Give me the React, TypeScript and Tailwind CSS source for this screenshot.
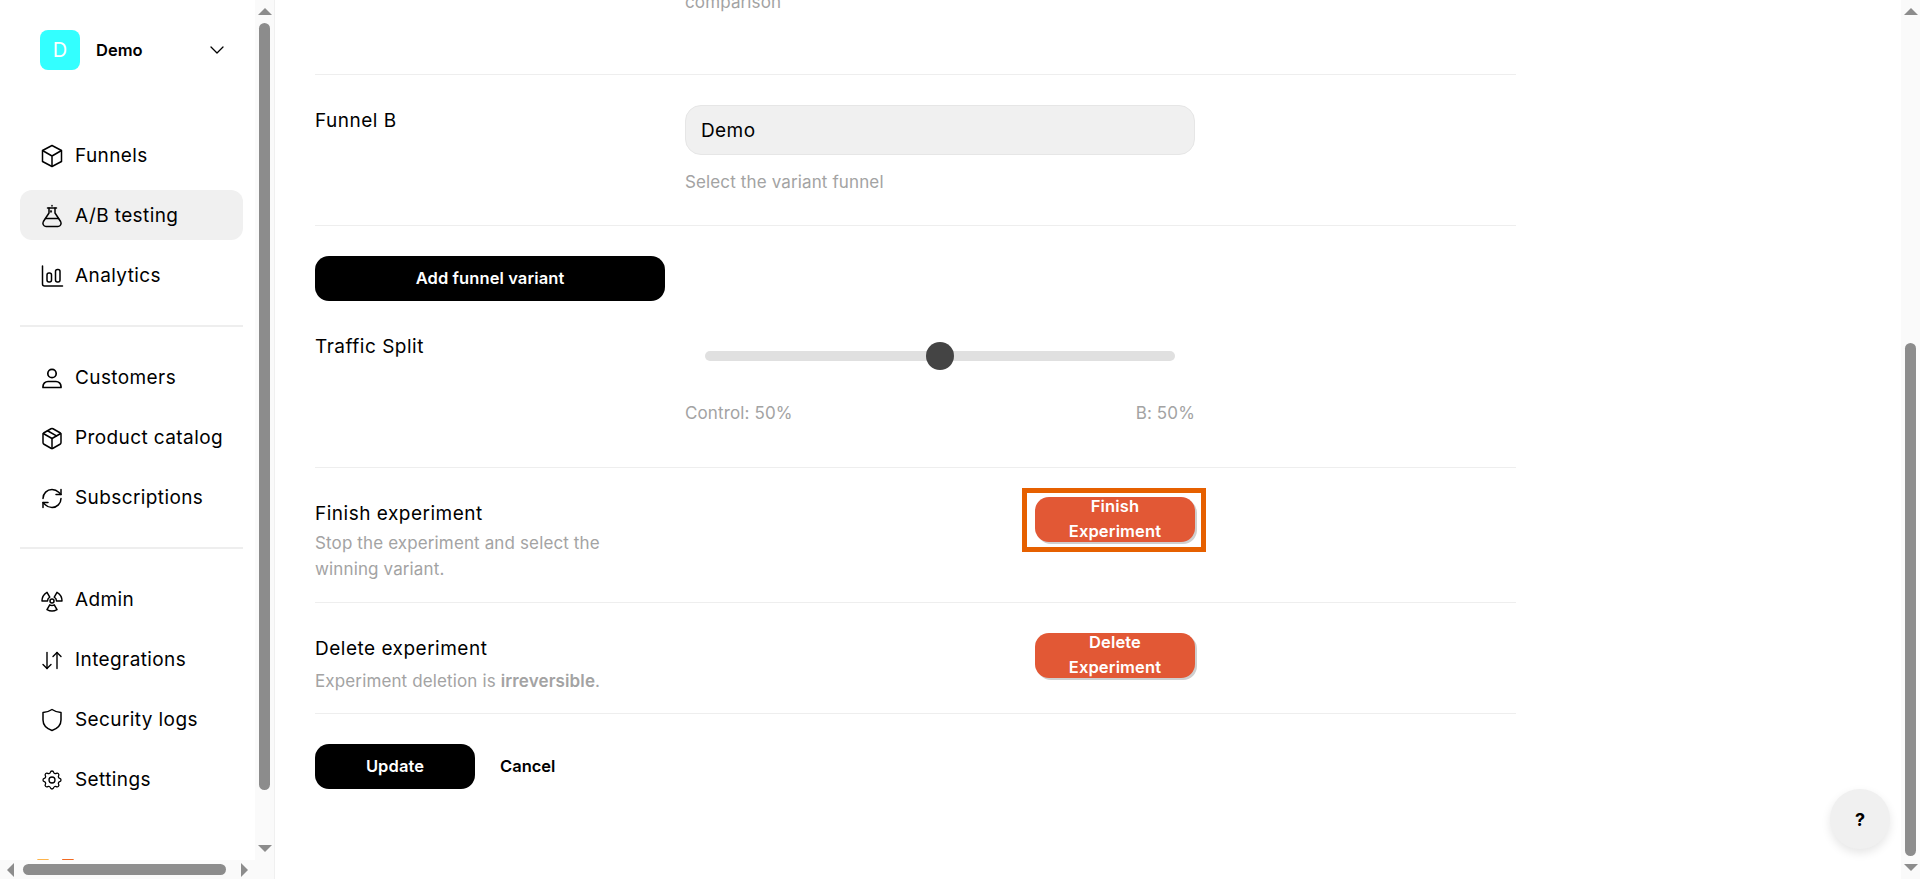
import { Fragment } from "react";
import { ChevronDown, ArrowDownUp, Package, RefreshCw } from "lucide-react";
import { TbSettings } from "react-icons/tb";

function BoxIcon() {
	return (
		<svg viewBox="0 0 24 24" className="w-[24px] h-[24px]" fill="none" stroke="currentColor" strokeWidth="1.5" strokeLinejoin="round">
			<path d="M12 1.5 21.5 6.5V17.5L12 22.5 2.5 17.5V6.5Z" />
			<path d="M2.5 6.5 12 12 21.5 6.5M12 12V22.5" />
		</svg>
	);
}

function FlaskIcon() {
	return (
		<svg viewBox="0 0 24 24" className="w-[24px] h-[24px]" fill="none" stroke="currentColor" strokeWidth="1.5" strokeLinecap="round" strokeLinejoin="round">
			<path d="M7.5 4h9M12 1.5v.5" />
			<path d="M9 4v5L3.4 17.5C2.2 19.6 3.4 22.5 6 22.5h12c2.6 0 3.8-2.9 2.6-5L15 9V4" />
			<path d="M5.5 14.5h13" />
			<circle cx="11" cy="7.5" r="0.4" />
		</svg>
	);
}

function ChartIcon() {
	return (
		<svg viewBox="0 0 24 24" className="w-[24px] h-[24px]" fill="none" stroke="currentColor" strokeWidth="1.5" strokeLinecap="round">
			<path d="M2.5 2V20a2 2 0 0 0 2 2h18" />
			<rect x="7" y="9" width="4.5" height="9" rx="2" />
			<rect x="15.5" y="5.5" width="4.5" height="12.5" rx="2" />
		</svg>
	);
}

function UserIcon() {
	return (
		<svg viewBox="0 0 24 24" className="w-[24px] h-[24px]" fill="none" stroke="currentColor" strokeWidth="1.7">
			<circle cx="12" cy="7.5" r="4.2" />
			<path d="M3 21.5v-1a5 5 0 0 1 5-5h8a5 5 0 0 1 5 5v1z" strokeLinejoin="round" />
		</svg>
	);
}

function RadiationIcon() {
	const lobe = "M9.75 16.9 7 21.66A10 10 0 0 0 17 21.66L14.25 16.9A4.5 4.5 0 0 1 9.75 16.9Z";
	return (
		<svg viewBox="0 0 24 24" className="w-[24px] h-[24px]" fill="none" stroke="currentColor" strokeWidth="1.5" strokeLinejoin="round">
			<circle cx="12" cy="13" r="2" />
			<path d={lobe} />
			<path d={lobe} transform="rotate(120 12 13)" />
			<path d={lobe} transform="rotate(240 12 13)" />
		</svg>
	);
}

function ShieldIcon() {
	return (
		<svg viewBox="0 0 24 24" className="w-[24px] h-[24px]" fill="none" stroke="currentColor" strokeWidth="1.5" strokeLinejoin="round">
			<path d="M12 1.5C14.8 3.4 17.8 4.4 21 4.6V12c0 5.2-3.6 8.6-9 10.5C6.6 20.6 3 17.2 3 12V4.6C6.2 4.4 9.2 3.4 12 1.5Z" />
		</svg>
	);
}

const navGroups = [
	[
		{ label: "Funnels", icon: <BoxIcon /> },
		{ label: "A/B testing", icon: <FlaskIcon />, active: true },
		{ label: "Analytics", icon: <ChartIcon /> },
	],
	[
		{ label: "Customers", icon: <UserIcon /> },
		{ label: "Product catalog", icon: <Package size={25} strokeWidth={1.5} /> },
		{ label: "Subscriptions", icon: <RefreshCw size={25} strokeWidth={1.5} /> },
	],
	[
		{ label: "Admin", icon: <RadiationIcon /> },
		{ label: "Integrations", icon: <ArrowDownUp size={25} strokeWidth={1.4} /> },
		{ label: "Security logs", icon: <ShieldIcon /> },
		{ label: "Settings", icon: <TbSettings size={30} strokeWidth={1.3} /> },
	],
];

function NavItem({ label, icon, active }: { label: string; icon: React.ReactNode; active?: boolean }) {
	return (
		<div className={`flex items-center h-[50px] pt-[2px] px-[20px] gap-[11px] rounded-[12px] text-[19px] tracking-[0.4px] ${active ? "bg-[#f0f0f0]" : ""}`}>
			<span className="w-[24px] h-[24px] flex items-center justify-center shrink-0">{icon}</span>
			<span className="pt-[1px]">{label}</span>
		</div>
	);
}

function Sidebar() {
	return (
		<div className="relative w-[275px] h-full shrink-0 border-r border-[#f0f0f0] flex flex-col overflow-hidden">
			<div className="flex flex-1 min-h-0">
				<div className="w-[255px] shrink-0 flex flex-col pl-[20px] pr-[12px] overflow-hidden">
					<div className="flex items-center mt-[30px] pl-[20px] pr-[14px]">
						<div className="w-[40px] h-[40px] rounded-[8px] bg-[#33ffff] text-white text-[20px] flex items-center justify-center">D</div>
						<div className="ml-[16px] font-semibold text-[16.5px] flex-1">Demo</div>
						<ChevronDown size={24} strokeWidth={1.3} />
					</div>
					<div className="mt-[60px] flex flex-col">
						{navGroups.map((group, i) => (
							<Fragment key={i}>
								{i > 0 && <div className="h-[2px] bg-[#eeeeee] mt-[25px] mb-[25px]" />}
								<div className="flex flex-col gap-[10px]">
									{group.map((item) => (
										<NavItem key={item.label} label={item.label} icon={item.icon} active={item.active} />
									))}
								</div>
							</Fragment>
						))}
					</div>
					{/* bottom of the logo, cut off by the scroll area */}
					<svg viewBox="0 0 37 3" className="mt-[55px] ml-[17px] w-[37px] h-[3px] shrink-0">
						<polygon points="0,0 12,0 10,3 2,3" fill="#fdb44b" />
						<polygon points="25,0 37,0 35,3 26,3" fill="#f26a21" />
					</svg>
				</div>
				<div className="w-[19px] shrink-0 bg-[#fafafa] flex flex-col items-center">
					<div className="mt-[8px] w-0 h-0 border-x-[7px] border-x-transparent border-b-[7px] border-b-[#8c8c8c]" />
					<div className="mt-[8px] w-[11px] h-[767px] rounded-full bg-[#8c8c8c]" />
					<div className="mt-[55px] w-0 h-0 border-x-[7px] border-x-transparent border-t-[7px] border-t-[#8c8c8c]" />
				</div>
			</div>
			<div className="h-[19px] shrink-0 bg-[#fafafa] flex items-center">
				<div className="ml-[7px] w-0 h-0 border-y-[7px] border-y-transparent border-r-[7px] border-r-[#8c8c8c]" />
				<div className="ml-[9px] w-[203px] h-[11px] rounded-full bg-[#8c8c8c]" />
				<div className="ml-[15px] w-0 h-0 border-y-[7px] border-y-transparent border-l-[7px] border-l-[#8c8c8c]" />
			</div>
		</div>
	);
}

function Row({ children, className }: { children: React.ReactNode; className?: string }) {
	return <div className={`flex border-b border-[#eeeeee] ${className ?? ""}`}>{children}</div>;
}

function RedButton({ first, outlined }: { first: string; outlined?: boolean }) {
	return (
		<div className="relative ml-[350px] w-[160px] h-[45px] pb-[2px] rounded-[14px] bg-[#e25835] shadow-[2px_2px_0_#cfcfcf] text-white font-semibold text-[16.5px] leading-[25px] tracking-[0.15px] text-center flex flex-col justify-center shrink-0">
			<div>{first}</div>
			<div>Experiment</div>
			{outlined && <div className="absolute -left-[13px] -right-[11px] -top-[9px] -bottom-[10px] border-[5px] border-[#e66000]" />}
		</div>
	);
}

function Main() {
	return (
		<div className="relative flex-1 h-full overflow-hidden flex">
			<div className="flex-1 pl-[40px]">
				<div className="w-[1201px]">
					<Row className="h-[75px]">
						<div className="ml-[370px] -mt-[11px] text-[17px] leading-[26px] text-[#a3a3a3] tracking-[0.13px]">comparison</div>
					</Row>
					<Row className="pt-[30px] pb-[30px]">
						<div className="w-[370px] pt-[3px] text-[19px] leading-[26px] tracking-[0.5px]">Funnel B</div>
						<div className="w-[510px]">
							<div className="h-[50px] pt-[2px] rounded-[16px] bg-[#f0f0f0] border border-[#e6e6e6] flex items-center px-[15px] text-[19px] tracking-[0.4px]">Demo</div>
							<div className="mt-[14px] text-[17px] leading-[26px] text-[#a3a3a3] tracking-[0.13px]">Select the variant funnel</div>
						</div>
					</Row>
					<div className="pt-[30px]">
						<div className="w-[350px] h-[45px] rounded-[14px] bg-black text-white font-semibold text-[16.5px] tracking-[0.1px] flex items-center justify-center">Add funnel variant</div>
					</div>
					<Row className="pt-[30px] pb-[41px]">
						<div className="w-[370px] pt-[3px] text-[19px] leading-[26px] tracking-[0.5px]">Traffic Split</div>
						<div className="w-[510px]">
							<div className="relative mx-[20px] mt-[11px] h-[28px] flex items-center justify-center">
								<div className="absolute inset-x-0 h-[10px] rounded-full bg-[#e0e0e0]" />
								<div className="relative w-[28px] h-[28px] rounded-full bg-[#444444]" />
							</div>
							<div className="mt-[30px] flex justify-between text-[17px] leading-[26px] text-[#a3a3a3] tracking-[0.13px]">
								<span>Control: 50%</span>
								<span>B: 50%</span>
							</div>
						</div>
					</Row>
					<Row className="h-[135px]">
						<div className="w-[370px] pt-[33px]">
							<div className="text-[19px] leading-[26px] tracking-[0.5px]">Finish experiment</div>
							<div className="mt-[3px] w-[320px] text-[17px] leading-[26px] text-[#a3a3a3] tracking-[0.13px]">Stop the experiment and select the winning variant.</div>
						</div>
						<div className="pt-[29px]">
							<RedButton first="Finish" outlined />
						</div>
					</Row>
					<Row className="h-[111px]">
						<div className="w-[370px] pt-[33px]">
							<div className="text-[19px] leading-[26px] tracking-[0.5px]">Delete experiment</div>
							<div className="mt-[6px] text-[17px] leading-[26px] text-[#a3a3a3] tracking-[0.13px]">
								Experiment deletion is <span className="font-semibold">irreversible</span>.
							</div>
						</div>
						<div className="pt-[30px]">
							<RedButton first="Delete" />
						</div>
					</Row>
					<div className="pt-[30px] flex items-center">
						<div className="w-[160px] h-[45px] rounded-[14px] bg-black text-white font-semibold text-[16.5px] tracking-[0.1px] flex items-center justify-center">Update</div>
						<div className="ml-[25px] font-semibold text-[16.5px]">Cancel</div>
					</div>
				</div>
			</div>
			<div className="w-[19px] shrink-0 bg-[#fafafa] flex flex-col items-center">
				<div className="mt-[8px] w-0 h-0 border-x-[7px] border-x-transparent border-b-[7px] border-b-[#8c8c8c]" />
				<div className="mt-[328px] w-[11px] h-[513px] rounded-full bg-[#8c8c8c]" />
				<div className="mt-[8px] w-0 h-0 border-x-[7px] border-x-transparent border-t-[7px] border-t-[#8c8c8c]" />
			</div>
			{/* help bubble */}
			<div className="absolute left-[1555px] top-[789px] w-[60px] h-[60px] rounded-full bg-[#f0f0f0] shadow-[0_4px_10px_rgba(0,0,0,0.1)] flex items-center justify-center font-bold text-[18px]">?</div>
		</div>
	);
}

export default function App() {
	return (
		<div className="flex w-full h-screen overflow-hidden bg-white text-black font-['Inter',sans-serif]">
			<Sidebar />
			<Main />
		</div>
	);
}
